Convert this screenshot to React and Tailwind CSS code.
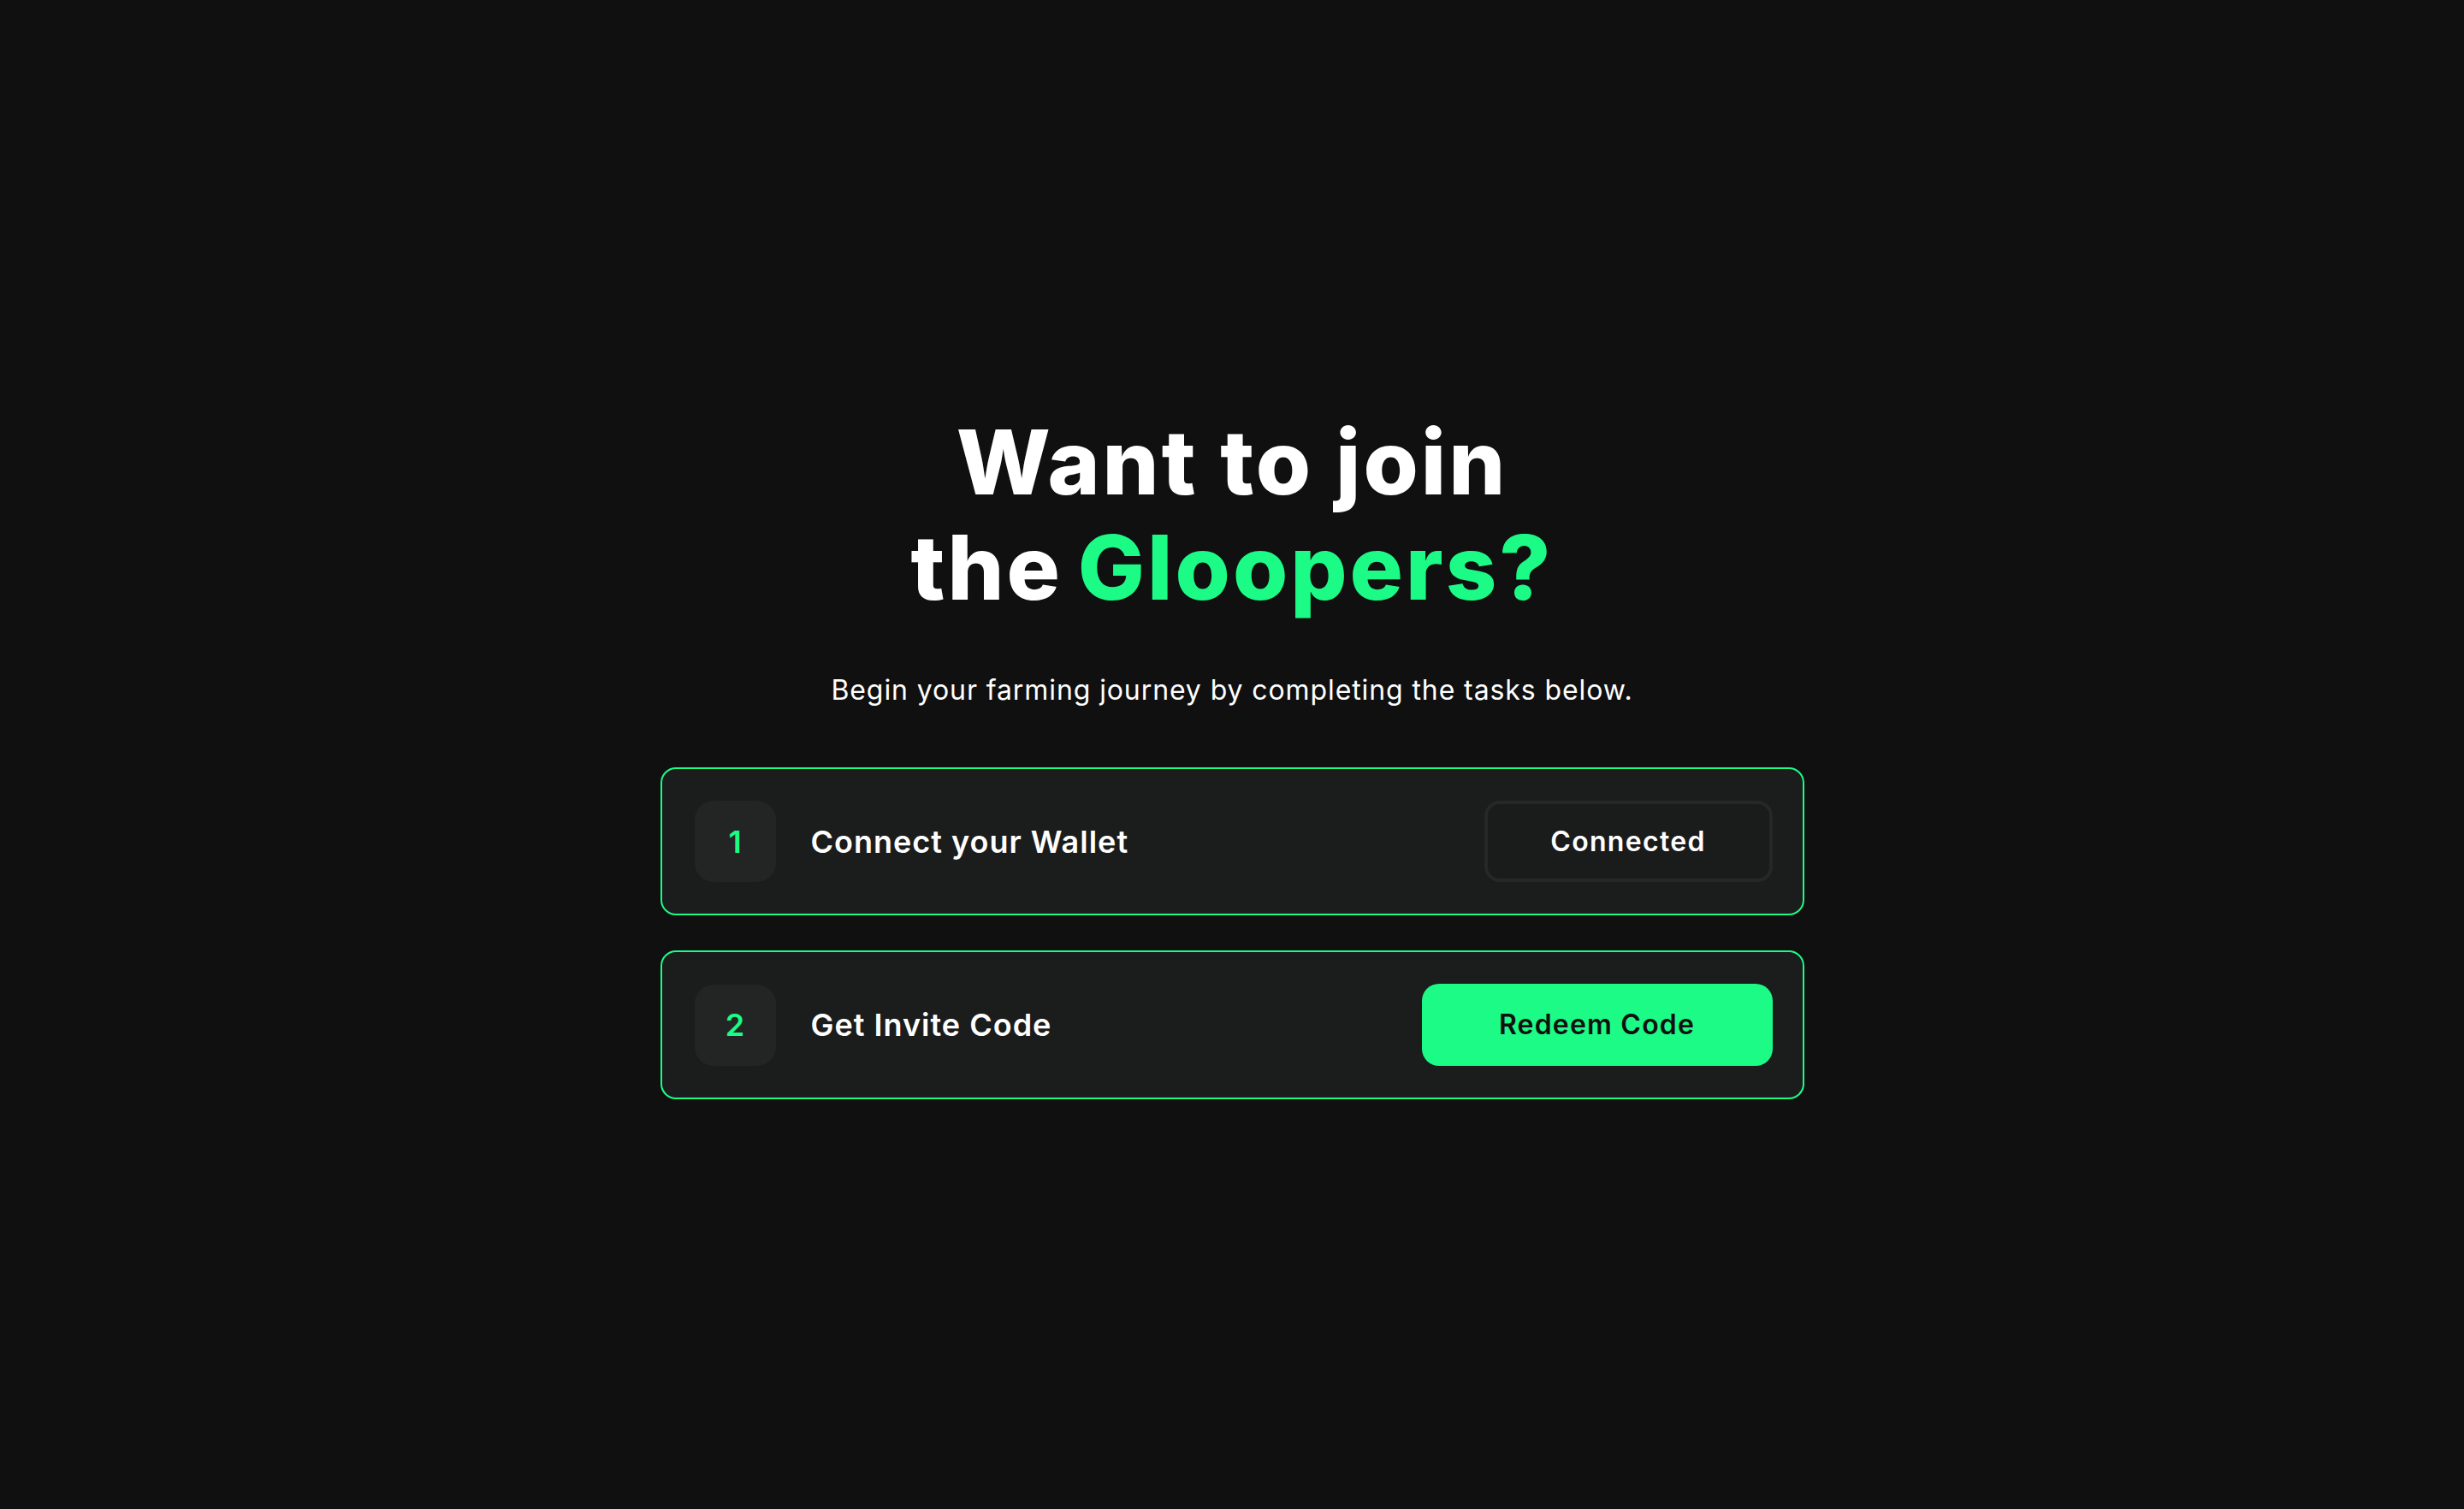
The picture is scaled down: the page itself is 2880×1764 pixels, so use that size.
export default function App() {
  const font = { fontFamily: 'Inter, "Noto Sans", sans-serif' };
  return (
    <div
      className="min-h-screen w-full bg-[#101010] flex flex-col items-center justify-center"
      style={font}
    >
      <h1 className="text-center text-[104px] leading-[123px] font-extrabold tracking-[3px] text-white">
        <span className="block">Want to join</span>
        <span className="block [word-spacing:-8px]">
          the <span className="text-[#1bfb86]">Gloopers?</span>
        </span>
      </h1>
      <p className="mt-[58px] text-[32px] leading-[48px] font-normal tracking-[0.9px] text-white text-center">
        Begin your farming journey by completing the tasks below.
      </p>
      <div className="mt-[66px] w-[1337px] flex flex-col gap-[41px]">
        <div className="flex items-center rounded-[18px] border-2 border-[#1bfb86] bg-[#1b1c1c] pl-[38px] pr-[35px] py-[37px]">
          <div className="w-[95px] h-[95px] rounded-[22px] bg-[#222524] flex items-center justify-center text-[36px] font-semibold text-[#1bfb86]">
            1
          </div>
          <div className="ml-[41px] text-[36px] font-semibold tracking-[1px] text-white">Connect your Wallet</div>
          <button className="ml-auto w-[337px] h-[95px] rounded-[18px] border-[4px] border-[#252827] bg-[#1a1b1b] text-[32px] font-semibold tracking-[1.3px] text-white">
            Connected
          </button>
        </div>
        <div className="flex items-center rounded-[18px] border-2 border-[#1bfb86] bg-[#1b1c1c] pl-[38px] pr-[35px] py-[37px]">
          <div className="w-[95px] h-[95px] rounded-[22px] bg-[#222524] flex items-center justify-center text-[36px] font-semibold text-[#1bfb86]">
            2
          </div>
          <div className="ml-[41px] text-[36px] font-semibold tracking-[1px] text-white">Get Invite Code</div>
          <button className="ml-auto w-[410px] h-[96px] rounded-[20px] bg-[#1bfb86] text-[32px] font-semibold tracking-[1.2px] text-[#111111]">
            Redeem Code
          </button>
        </div>
      </div>
    </div>
  );
}
